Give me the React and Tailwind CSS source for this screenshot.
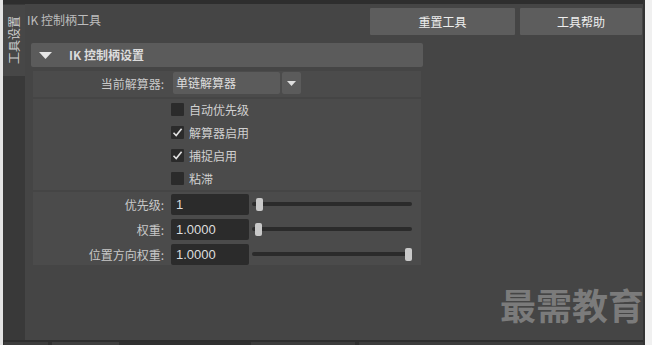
import React from "react";

const FONT = { fontFamily: '"Noto Sans CJK SC", "Liberation Sans", sans-serif' };

const CHECKS = [
  { label: "自动优先级", on: false },
  { label: "解算器启用", on: true },
  { label: "捕捉启用", on: true },
  { label: "粘滞", on: false },
];

const SLIDERS = [
  { label: "优先级:", value: "1", thumb: 4 },
  { label: "权重:", value: "1.0000", thumb: 3 },
  { label: "位置方向权重:", value: "1.0000", thumb: 153 },
];

function Check({ on }) {
  return (
    <span className="flex h-[13px] w-[13px] items-center justify-center rounded-[1px] bg-[#2b2b2b]">
      {on && (
        <svg width="11" height="11" viewBox="0 0 11 11">
          <polyline points="1.5,5.8 4.2,8.6 9.6,1.8" fill="none" stroke="#e2e2e2" strokeWidth="1.6" />
        </svg>
      )}
    </span>
  );
}

function Slider({ thumb }) {
  return (
    <div className="relative ml-[3px] h-[13px] w-[160px]">
      <div className="absolute left-0 right-0 top-[4px] h-[4px] rounded-full bg-[#2b2b2b]" />
      <div
        className="absolute top-0 h-[13px] w-[7px] rounded-[2px] bg-[#c9c9c9]"
        style={{ left: thumb }}
      />
    </div>
  );
}

export default function App() {
  return (
    <div className="relative flex h-[345px] w-[652px] overflow-hidden bg-[#2e2e2e] text-[12px]" style={FONT}>
      <div className="w-[3px] bg-[#e4e4e4]" />

      <div className="flex w-[640px] flex-col">
        <div className="h-[4px] bg-[#2e2e2e]" />
        <div className="flex h-[336px]">
          {/* tab column */}
          <div className="w-[22px] bg-[#393939]">
            <div className="mt-[1px] flex h-[71px] items-start justify-center bg-[#474747] pt-[11px]">
              <span className="rotate-180 text-[12px] leading-none text-[#d0d0d0] [writing-mode:vertical-rl] [text-orientation:sideways]">
                工具设置
              </span>
            </div>
          </div>

          {/* main */}
          <div className="flex w-[618px] flex-col bg-[#454545]">
            <div className="flex items-center pl-[2px] pr-[1px] pt-[4px]">
              <span className="flex-1 -mt-[4px] text-[#bdbdbd]">IK 控制柄工具</span>
              <button className="h-[27px] w-[145px] rounded-[1px] bg-[#5d5d5d] text-[#eeeeee]">重置工具</button>
              <button className="ml-[5px] h-[27px] w-[122px] rounded-[1px] bg-[#5d5d5d] text-[#eeeeee]">工具帮助</button>
            </div>

            {/* frame header */}
            <div className="ml-[6px] mt-[8px] flex h-[24px] w-[392px] items-center rounded-[2px] bg-[#5b5b5b]">
              <svg className="ml-[8px]" width="13" height="7" viewBox="0 0 13 7">
                <polygon points="0,0 13,0 6.5,7" fill="#e6e6e6" />
              </svg>
              <span className="ml-[17px] font-bold text-[#dcdcdc]">IK 控制柄设置</span>
            </div>

            <div className="ml-[8px] mt-[4px] flex w-[388px] flex-col gap-[2px]">
              {/* solver */}
              <div className="flex h-[26px] items-start bg-[#4b4b4b] pt-[1px]">
                <span className="w-[131px] pt-[3px] text-right text-[#c8c8c8]">当前解算器:</span>
                <div className="ml-[9px] flex h-[22px] w-[107px] items-center rounded-[2px] bg-[#5b5b5b] pl-[3px] text-[#dedede]">
                  单链解算器
                </div>
                <div className="ml-[2px] flex h-[22px] w-[19px] items-center justify-center rounded-[2px] bg-[#5b5b5b]">
                  <svg width="9" height="5" viewBox="0 0 9 5">
                    <polygon points="0,0 9,0 4.5,5" fill="#dedede" />
                  </svg>
                </div>
              </div>

              {/* checkboxes */}
              <div className="flex h-[91px] flex-col bg-[#4b4b4b] pl-[138px]">
                {CHECKS.map((c, i) => (
                  <div key={i} className={"flex h-[23px] items-center" + (i === 0 ? " -mt-[1px]" : "")}>
                    <Check on={c.on} />
                    <span className="ml-[5px] text-[#d0d0d0]">{c.label}</span>
                  </div>
                ))}
              </div>

              {/* sliders */}
              <div className="flex h-[73px] flex-col gap-[4px] bg-[#4b4b4b] pt-[2px]">
                {SLIDERS.map((s, i) => (
                  <div key={i} className="flex h-[21px] items-center">
                    <span className="w-[131px] text-right text-[#c8c8c8]">{s.label}</span>
                    <div
                      className="ml-[7px] flex h-[21px] w-[78px] items-center rounded-[2px] bg-[#2b2b2b] pl-[5px] text-[13px] text-[#dedede]"
                      style={{ fontFamily: '"Liberation Sans", sans-serif' }}
                    >
                      {s.value}
                    </div>
                    <Slider thumb={s.thumb} />
                  </div>
                ))}
              </div>
            </div>
          </div>
        </div>

        {/* bottom strip */}
        <div className="flex h-[5px] flex-col">
          <div className="h-[2px] bg-[#2e2e2e]" />
          <div className="flex h-[3px] gap-[4px] bg-[#303030] pl-[1px]">
            <div className="w-[44px] bg-[#3c3c3c]" />
            <div className="w-[67px] bg-[#3f3f3f]" />
            <div className="ml-[128px] w-[104px] bg-[#3c3c3c]" />
            <div className="flex-1 bg-[#3c3c3c]" />
          </div>
        </div>
      </div>

      <div className="w-[2px] bg-[#333333]" />
      <div className="w-[7px] bg-[#f0f0f0]" />

      {/* watermark */}
      <span className="absolute left-[500px] top-[286px] text-[36px] font-bold leading-none text-[#7b7b7b]">
        最需教育
      </span>
    </div>
  );
}
